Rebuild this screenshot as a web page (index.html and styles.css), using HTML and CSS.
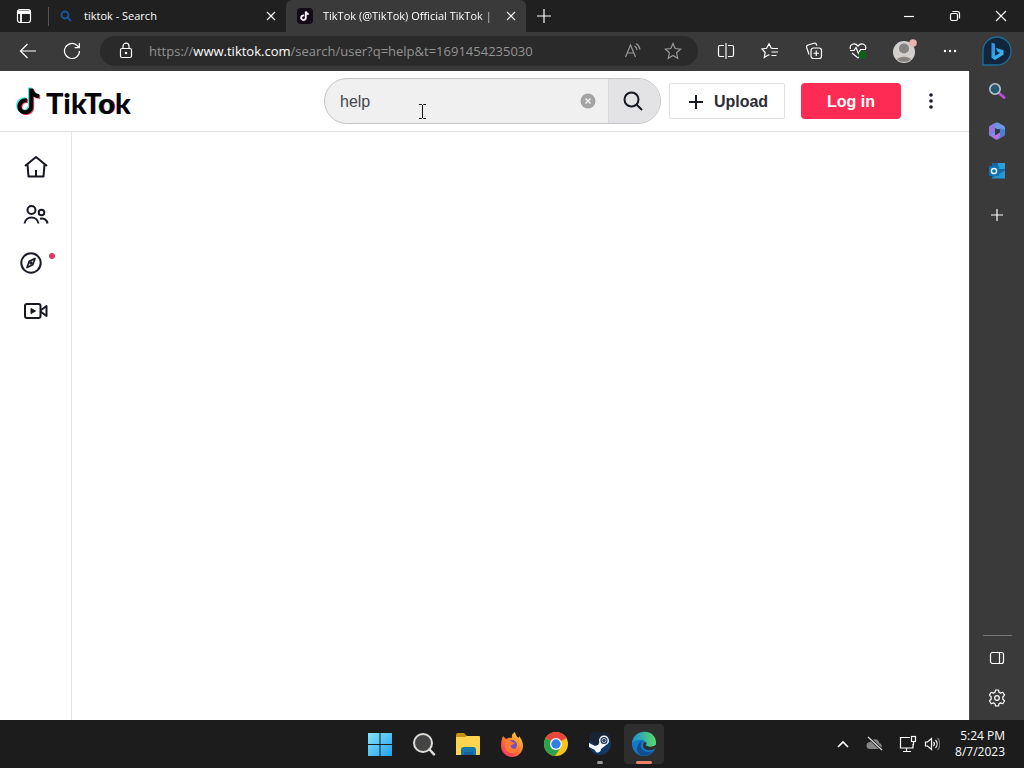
FILE: index.html
```html
<!DOCTYPE html>
<html lang="en">
<head>
<meta charset="utf-8">
<meta name="viewport" content="width=device-width, initial-scale=1">
<title>TikTok (@TikTok) Official TikTok</title>
<link rel="stylesheet" href="styles.css">
</head>
<body>
<div class="desktop">
  <div class="tabstrip">
    <button class="workspace" aria-label="Tab actions"><svg width="16" height="16" viewBox="0 0 16 16" class="line"><rect x="1.5" y="1.5" width="13" height="13" rx="2.5"/><path d="M1.5 3.5h13M2 5h12M5 5v9.500" stroke-width="1.800"/></svg></button>
    <div class="tab">
      <svg width="12" height="12" viewBox="0 0 12 12" fill="none" stroke="#17569c" stroke-width="1.800"><circle cx="5" cy="5" r="3.500"/><path d="M7.500 7.500L11 11"/></svg>
      <span class="tab-title">tiktok - Search</span>
      <button class="tab-close" aria-label="Close tab"><svg width="10" height="10" viewBox="0 0 10 10" class="line"><path d="M1 1l8 8M9 1L1 9"/></svg></button>
    </div>
    <div class="tab tab-active">
      <svg width="16" height="16" viewBox="0 0 16 16"><rect width="16" height="16" rx="4" fill="#120b18"/><g fill="none" stroke-width="1.700"><path d="M7 7.500a2.300 2.300 0 1 0 1.700 2.300V3.500c.3 1.500 1.300 2.500 3 2.500" stroke="#7c4a60" transform="translate(.4 .3)"/><path d="M7 7.500a2.300 2.300 0 1 0 1.700 2.300V3.500c.3 1.500 1.300 2.500 3 2.500" stroke="#fff"/></g></svg>
      <span class="tab-title">TikTok (@TikTok) Official TikTok |</span>
      <button class="tab-close" aria-label="Close tab"><svg width="10" height="10" viewBox="0 0 10 10" class="line"><path d="M1 1l8 8M9 1L1 9"/></svg></button>
    </div>
    <button class="new-tab" aria-label="New tab"><svg width="14" height="14" viewBox="0 0 14 14" class="line"><path d="M7 0v14M0 7h14"/></svg></button>
    <div class="window-controls">
      <button aria-label="Minimize"><svg width="10" height="10" viewBox="0 0 10 10" class="line"><path d="M0 5.500h10"/></svg></button>
      <button aria-label="Restore"><svg width="12" height="12" viewBox="0 0 12 12" class="line"><rect x="1.500" y="3.500" width="7" height="7" rx="1.500"/><path d="M3.500 1.500h5a2 2 0 0 1 2 2v5"/></svg></button>
      <button aria-label="Close"><svg width="12" height="12" viewBox="0 0 12 12" class="line"><path d="M1 1l10 10M11 1L1 11"/></svg></button>
    </div>
  </div>

  <div class="toolbar">
    <button class="tool" aria-label="Back"><svg width="18" height="18" viewBox="0 0 18 18" class="line"><path d="M17 9H1.500M8.500 2L1.500 9l7 7"/></svg></button>
    <button class="tool" aria-label="Refresh"><svg width="18" height="18" viewBox="0 0 18 18" class="line"><path d="M16.500 9A7.500 7.500 0 1 1 14 3.400L16 5.500M16.300 1v4.700h-4.700"/></svg></button>
    <div class="address">
      <svg width="16" height="18" viewBox="0 0 16 18" class="line"><rect x="2.500" y="6.500" width="11" height="9" rx="1.500"/><path d="M5 6.500V4.200a3 3 0 0 1 6 0v2.300"/><circle cx="8" cy="11" r=".7" fill="#fff"/></svg>
      <div class="url" role="textbox" aria-label="Address and search bar" contenteditable="true" spellcheck="false">https://<span class="host">www.tiktok.com</span>/search/user?q=help&amp;t=1691454235030</div>
      <button class="address-tool" aria-label="Read aloud"><svg width="18" height="18" viewBox="0 0 18 18" class="line dim"><path d="M1.500 15L6.500 3l5 12M3.200 11h6.600M10.500 4a5 5 0 0 1 2.500 4M12 1.500a8 8 0 0 1 4 6"/></svg></button>
      <button class="address-tool" aria-label="Add to favorites"><svg width="18" height="18" viewBox="0 0 18 18" class="line dim"><path d="M9 1.500l2.200 5 5.400.6-4 3.700 1.100 5.400L9 13.500l-4.700 2.700 1.100-5.400-4-3.700 5.400-.6z"/></svg></button>
    </div>
    <button class="tool" aria-label="Split screen"><svg width="18" height="16" viewBox="0 0 18 16" class="line"><path d="M7 2.500H3a1.500 1.500 0 0 0-1.500 1.500v8A1.500 1.500 0 0 0 3 13.500h4M11 2.500h4a1.500 1.500 0 0 1 1.500 1.500v8a1.500 1.500 0 0 1-1.500 1.500h-4"/><path d="M9 0v16" stroke="#aaa" stroke-width="2"/></svg></button>
    <button class="tool" aria-label="Favorites"><svg width="18" height="18" viewBox="0 0 18 18" class="line"><path d="M8.500 13.200L7.500 12.800l-4.200 2.700.9-5L1 7l4.600-.7L8 1.800l2.200 4.200 1.300.4M10.500 6.500h6.500M10.500 10h6.500M10.500 13.500h5"/></svg></button>
    <button class="tool" aria-label="Collections"><svg width="18" height="18" viewBox="0 0 18 18" class="line"><rect x="6" y="6" width="10.500" height="10.500" rx="2.500"/><path d="M11.250 8.500v5.500M8.500 11.250H14M4 12.500l-2.300-7A2 2 0 0 1 3 3l6-1.800a2 2 0 0 1 2.500 1.300l.3 1.200"/></svg></button>
    <button class="tool" aria-label="Browser essentials"><svg width="18" height="18" viewBox="0 0 18 18" class="line"><path d="M1.500 7C0 2.500 5.500 0 9 4c3.500-4 9-1.500 7.500 3M3 11l6 5 2-2M1 8.500h4l2-3 2.500 6 2-4H17"/><circle cx="13.500" cy="13" r="4" fill="#0b6318" stroke="none"/></svg></button>
    <button class="tool profile" aria-label="Profile"><svg width="26" height="26" viewBox="0 0 26 26"><circle cx="13" cy="14" r="11" fill="#d2cfcc"/><circle cx="13" cy="10.500" r="5" fill="#85827f"/><path d="M6 21.500a8 5.500 0 0 1 14 0 11 11 0 0 1-14 0z" fill="#85827f"/><circle cx="22" cy="5" r="3.800" fill="#e9b3b2"/></svg></button>
    <button class="tool" aria-label="Settings and more"><svg width="14" height="4" viewBox="0 0 14 4" fill="#fff"><circle cx="2" cy="2" r="1.200"/><circle cx="7" cy="2" r="1.200"/><circle cx="12" cy="2" r="1.200"/></svg></button>
    <button class="tool bing" aria-label="Bing Chat"><svg width="32" height="32" viewBox="0 0 32 32"><defs><linearGradient id="bing" x2="1" y2="1"><stop stop-color="#2f86e8"/><stop offset=".5" stop-color="#2aa6ee"/><stop offset="1" stop-color="#49c3f2"/></linearGradient></defs><path d="M2 30V16A14 14 0 1 1 16 30z" fill="#12263b" stroke="#1b6f9c" stroke-width="1.300"/><path d="M10.500 7.500l3.500 1.300v12l5-2.800-2.500-1.300-1.500-4 7.500 2.600v4.200L14 25l-3.500-2.300z" fill="url(#bing)"/></svg></button>
  </div>

  <div class="workspace-row">
    <div class="page">
      <header class="site-header">
        <a class="brand" href="#"><svg width="25" height="29" viewBox="0 0 25 29"><defs><path id="note" d="M12 .5h4c.4 3.300 2.600 5.500 6 5.700v4c-2.300 0-4.300-.7-6-1.900v10.200c0 10.500-15.800 10.300-15.800 0C.2 13 4.500 9.800 9.700 10.300v4.200c-3.100-.8-5.500 1-5.500 4 0 5.300 7.800 5.200 7.800-.6z"/></defs><use href="#note" fill="#45e8e0"/><use href="#note" fill="#f0406a" x="2.200" y="1.800"/><use href="#note" fill="#050505" x="1.200" y=".9"/></svg><span class="wordmark">TikT<span class="wordmark-o">o</span>k</span></a>
        <form class="search">
          <input class="search-input" type="text" value="help" aria-label="Search">
          <button class="clear" type="button" aria-label="Clear"><svg width="16" height="16" viewBox="0 0 16 16"><circle cx="8" cy="8" r="7.500" fill="#a4a4a5"/><path d="M5.500 5.500l5 5M10.500 5.500l-5 5" stroke="#f5f5f5" stroke-width="1.300"/></svg></button>
          <button class="search-button" type="button" aria-label="Submit search"><svg width="20" height="20" viewBox="0 0 20 20" fill="none" stroke="#161823" stroke-width="2"><circle cx="8.500" cy="8.500" r="7"/><path d="M13.500 13.500l5.500 5.500"/></svg></button>
        </form>
        <div class="actions">
          <button class="upload"><svg width="16" height="16" viewBox="0 0 16 16" stroke="#161823" stroke-width="2"><path d="M8 1v14M1 8h14"/></svg><span>Upload</span></button>
          <button class="login">Log in</button>
          <button class="more" aria-label="More"><svg width="4" height="18" viewBox="0 0 4 18" fill="#161823"><circle cx="2" cy="3" r="1.800"/><circle cx="2" cy="9" r="1.800"/><circle cx="2" cy="15" r="1.800"/></svg></button>
        </div>
      </header>
      <div class="content">
        <nav class="rail" aria-label="Main">
          <a href="#" aria-label="For You"><svg width="24" height="24" viewBox="0 0 24 24" class="ink"><path d="M1 11L12 2l11 9M3.500 9.500L4.500 21.500h15l1-12M12 15v6.500"/></svg></a>
          <a href="#" aria-label="Following"><svg width="26" height="24" viewBox="0 0 26 24" class="ink"><circle cx="8.500" cy="7" r="4"/><path d="M1.500 20.500c1-8 13-8 14 0"/><circle cx="18.500" cy="9.500" r="2.800"/><path d="M17 15.700c4-1 7 1 7.500 4.800"/></svg></a>
          <a href="#" class="explore" aria-label="Explore"><svg width="24" height="24" viewBox="0 0 24 24" class="ink"><circle cx="12" cy="12" r="9.700"/><path d="M16 7.500l-2.200 6.300L8 16.500l2.200-6.300z" stroke-width="1.700"/><circle cx="12" cy="12" r=".8"/></svg><span class="dot"></span></a>
          <a href="#" aria-label="Live"><svg width="26" height="24" viewBox="0 0 26 24" class="ink"><rect x="2" y="5" width="15.500" height="14" rx="2"/><path d="M17.500 11.500l6-4.500v10l-6-4.500"/><path d="M8 9.500l4.500 2.500L8 14.500z" fill="#161823" stroke-width="1"/></svg></a>
        </nav>
        <main class="results"></main>
      </div>
    </div>
    <aside class="sidebar">
      <button aria-label="Search"><svg width="18" height="18" viewBox="0 0 18 18"><path d="M11.500 11.500l4.500 4" stroke="#b94bd8" stroke-width="3" stroke-linecap="round"/><circle cx="7" cy="7" r="5.200" fill="#28596e" stroke="#bcc4cb" stroke-width="1.600"/></svg></button>
      <button aria-label="Microsoft 365"><svg width="18" height="18" viewBox="0 0 18 18"><path d="M9 .5q1 0 2 .5l5 3q1 .6 1 2v4l-5-3-5 1v6L2 14q-1-.6-1-2V6q0-1.300 1-2l5-3q1-.5 2-.5z" fill="#6c97e6"/><path d="M1 6q0-1.300 1-2l5-3v7l-2 4-4 1z" fill="#9278dc"/><path d="M17 8v4q0 1.400-1 2l-5 3q-2 1-4 0l-4-2.500 5-1 4-3V6z" fill="#4a7fd8"/><path d="M2 13.500l6-.5 4-2.500v4l-3 3q-1 0-2-.5z" fill="#b870da"/><path d="M7 6l5 2.500-5 3.500z" fill="#303644"/></svg></button>
      <button aria-label="Outlook"><svg width="18" height="18" viewBox="0 0 18 18"><path d="M4 1h13v15H4z" fill="#1569a8"/><path d="M10 1h7v6h-7z" fill="#2b9fd8"/><path d="M3 16.500l14-8v8z" fill="#2596d2"/><rect x="1" y="4" width="10" height="10" rx="1" fill="#0b70ba"/><circle cx="6" cy="9" r="2.600" fill="none" stroke="#e6f2fa" stroke-width="1.500"/></svg></button>
      <button class="customize" aria-label="Customize"><svg width="14" height="14" viewBox="0 0 14 14" class="line"><path d="M7 1v12M1 7h12"/></svg></button>
      <div class="sidebar-bottom">
        <button aria-label="Hide sidebar"><svg width="16" height="14" viewBox="0 0 16 14" class="line"><rect x="1.500" y="1.500" width="13" height="11" rx="2"/><path d="M10.500 1.500v11"/></svg></button>
        <button aria-label="Sidebar settings"><svg width="18" height="18" viewBox="0 0 18 18" class="line"><path d="M7.500 1h3l.5 2.300 1.500.8 2.300-.8 1.700 2.800L14.800 8v2l1.700 1.900-1.700 2.800-2.300-.8-1.500.8-.5 2.300h-3L7 14.700l-1.500-.8-2.300.8-1.700-2.800L3.200 10V8L1.500 6.100l1.700-2.800 2.300.8L7 3.300z" stroke-linejoin="round"/><circle cx="9" cy="9" r="2.300"/></svg></button>
      </div>
    </aside>
    <svg class="cursor" width="7" height="17" viewBox="0 0 7 17" fill="none" stroke="#111"><path d="M0 1.500h2.500l1 1 1-1H7M3.500 2v13M0 15.500h2.500l1-1 1 1H7"/></svg>
  </div>

  <footer class="taskbar">
    <div class="apps">
      <button aria-label="Start"><svg width="24" height="24" viewBox="0 0 24 24"><defs><linearGradient id="win" x2="1" y2="1"><stop stop-color="#83e5fa"/><stop offset="1" stop-color="#21a1ed"/></linearGradient></defs><path d="M0 1h11.500v11H0zM12.500 1H24v11H12.500zM0 13h11.500v11H0zM12.500 13H24v11H12.500z" fill="url(#win)"/></svg></button>
      <button aria-label="Search"><svg width="24" height="24" viewBox="0 0 24 24"><circle cx="11" cy="11" r="9" fill="#454545" stroke="#deddda" stroke-width="2"/><path d="M17.500 17.500l4.500 4.800" stroke="#deddda" stroke-width="2.500" stroke-linecap="round"/></svg></button>
      <button aria-label="File Explorer"><svg width="26" height="24" viewBox="0 0 26 24"><path d="M1 3q0-2 2-2h6l3 3h12v6H1z" fill="#c8920f"/><path d="M1 5h9l2-1h12q1 0 1 1v17q0 1-1 1H1z" fill="#fcd44f"/><path d="M6 23v-5q0-3 3-3h9q3 0 3 3v5z" fill="#1676ad"/><path d="M9 20h9v3H9z" fill="#1164a0"/></svg></button>
      <button aria-label="Firefox"><svg width="26" height="26" viewBox="0 0 26 26"><defs><linearGradient id="fox" x1="1" x2=".2" y2="1"><stop stop-color="#ffe34d"/><stop offset=".45" stop-color="#ff8d28"/><stop offset="1" stop-color="#f52f65"/></linearGradient></defs><path d="M4 5l3 3q3-2 6-1-1-4 3-6 1 5 4 6v-2q4 5 4 10a11 11 0 0 1-22 0q0-6 2-10z" fill="url(#fox)"/><circle cx="13" cy="14" r="5" fill="#7650bc"/><path d="M6 9q5-1 7 2l3 1q-2 2-4 2-1 3 3 4 4 0 5-4 1 7-6 8-8 0-8-7z" fill="#ff7a33"/></svg></button>
      <button aria-label="Chrome"><svg width="26" height="26" viewBox="0 0 26 26"><circle cx="13" cy="13" r="12" fill="#fbc517"/><path d="M13 13L2.600 7a12 12 0 0 1 20.800 0z" fill="#e8453c"/><path d="M13 13L2.600 7A12 12 0 0 0 12 25l6-9z" fill="#2ba14b"/><circle cx="13" cy="13" r="6" fill="#fff"/><circle cx="13" cy="13" r="4.700" fill="#337fe8"/></svg></button>
      <button class="running" aria-label="Steam"><svg width="24" height="24" viewBox="0 0 24 24"><circle cx="12" cy="12" r="11" fill="#123a65"/><path d="M1 8A11 11 0 0 1 23 8L10 15z" fill="#172436"/><path d="M1 11l6 3 3-1 3-5 5 5-5 4c0 4-5 5-6 1l-6-3z" fill="#f4f7fa"/><circle cx="16" cy="8.500" r="4.300" fill="#172e49" stroke="#f4f7fa" stroke-width="1.500"/><circle cx="16" cy="8.500" r="2" fill="none" stroke="#c8d4df"/></svg></button>
      <button class="current" aria-label="Microsoft Edge"><svg width="26" height="26" viewBox="0 0 26 26"><defs><linearGradient id="edge"><stop stop-color="#1b91d9"/><stop offset="1" stop-color="#59da65"/></linearGradient></defs><circle cx="13" cy="13" r="12" fill="#1677c6"/><path d="M1 12C3-3 25-3 25 12c0 6-9 7-10 3 3-6-7-9-14-3z" fill="url(#edge)"/><path d="M11 10c-4 8 3 13 11 10-7 9-17 4-16-3q1-5 5-7z" fill="#124d8e"/><path d="M13 11q-3 6 3 8 5 1 9-2v-3q-5 3-9 1-3-1 0-3z" fill="#2e2e2e"/></svg></button>
    </div>
    <div class="tray">
      <button class="chevron" aria-label="Show hidden icons"><svg width="12" height="12" viewBox="0 0 12 12" class="line"><path d="M1 9l5-5 5 5" stroke-width="1.600"/></svg></button>
      <button class="cloud" aria-label="OneDrive"><svg width="18" height="16" viewBox="0 0 18 16"><path d="M4 13a3.500 3.500 0 0 1 0-7 5 5 0 0 1 9.300 1A3.200 3.200 0 0 1 14 13z" fill="#858585"/><path d="M2 1l14 13" stroke="#1c1c1c" stroke-width="3"/><path d="M2 1l14 13" stroke="#ddd" stroke-width="1.200"/></svg></button>
      <button class="status" aria-label="Network and volume"><svg width="18" height="18" viewBox="0 0 18 18" class="line"><path d="M11 2.500H1.500v10.500H14V9M7.500 13v3.500M4 16.500h8"/><rect x="12.500" y="1.500" width="4" height="5"/><path d="M14.500 6.500V10"/></svg><svg width="16" height="16" viewBox="0 0 16 16" class="line"><path d="M1.500 6h2L7.500 2.500v11L3.500 10h-2zM9.500 6a3 3 0 0 1 0 4M11.500 4a6 6 0 0 1 0 8"/><path d="M13.500 2a9 9 0 0 1 0 12" stroke="#777"/></svg></button>
      <button class="clock"><time datetime="17:24">5:24 PM</time><time datetime="2023-08-07">8/7/2023</time></button>
    </div>
  </footer>
</div>
</body>
</html>
```
FILE: styles.css
```css
* { box-sizing: border-box; }

body {
  margin: 0;
  font-family: "Open Sans", "Noto Sans", sans-serif;
  color: #fff;
  background: #1c1c1c;
}

button {
  margin: 0;
  padding: 0;
  border: 0;
  background: none;
  color: inherit;
  font: inherit;
  display: flex;
  align-items: center;
  justify-content: center;
}

svg { flex: none; display: block; }

.line { fill: none; stroke: #fff; stroke-width: 1.2; }
.dim { stroke: #9a9a9a; }
.ink { fill: none; stroke: #161823; stroke-width: 2; stroke-linejoin: round; }

.desktop { min-height: 100vh; display: flex; flex-direction: column; }

/* Tab strip */
.tabstrip { height: 32px; display: flex; background: #202020; }
.workspace { width: 48px; }
.tab {
  width: 238px;
  padding-left: 12px;
  display: flex;
  align-items: center;
  gap: 12px;
  font-size: 11px;
  position: relative;
}
.tab:not(.tab-active)::before {
  content: "";
  position: absolute;
  left: 0;
  top: 7px;
  width: 1px;
  height: 19px;
  background: #555;
}
.tab-active {
  width: 240px;
  padding-left: 11px;
  gap: 10px;
  background: #3a3a3a;
  border-radius: 6px 6px 0 0;
}
.tab-title {
  flex: 1;
  min-width: 0;
  white-space: nowrap;
  line-height: 20px;
}
.tab-active .tab-title { mask-image: linear-gradient(to right, #000 88%, rgba(0, 0, 0, 0.4)); }
.tab-close { width: 30px; height: 32px; margin-left: -12px; }
.new-tab { width: 36px; }
.window-controls { display: flex; margin-left: auto; }
.window-controls button { width: 46px; }

/* Toolbar */
.toolbar {
  height: 39px;
  padding: 0 2px 1px 6px;
  display: flex;
  align-items: center;
  background: #3a3a3a;
}
.tool { width: 44px; height: 36px; }
.profile { width: 48px; }
.bing { width: 50px; }
.address {
  flex: 1;
  min-width: 0;
  height: 30px;
  margin: 0 6px;
  padding: 0 5px 0 18px;
  display: flex;
  align-items: center;
  background: #2a2a2a;
  border-radius: 15px;
}
.url {
  flex: 1;
  min-width: 0;
  margin-left: 15px;
  overflow: hidden;
  white-space: nowrap;
  font-size: 13px;
  line-height: 20px;
  color: #939393;
}
.host { color: #fff; }
.address-tool { width: 40px; height: 30px; }

/* Browser body */
.workspace-row { flex: 1; display: flex; position: relative; background: #3a3a3a; }
.page {
  flex: 1;
  min-width: 0;
  display: flex;
  flex-direction: column;
  background: #fff;
  color: #161823;
  font-family: "Liberation Sans", Arial, sans-serif;
}
.site-header {
  height: 61px;
  padding: 0 16px;
  display: flex;
  align-items: center;
  border-bottom: 1px solid #e0e0e1;
}
.brand { display: flex; align-items: center; gap: 5px; color: #050505; text-decoration: none; }
.wordmark { padding-top: 3px; font-family: Lato, sans-serif; font-weight: 900; font-size: 29px; line-height: 32px; }
.wordmark-o { text-shadow: -1px 0 #25f4ee, 1px 0 #fe2c55; }

.search {
  width: 337px;
  height: 46px;
  margin-left: auto;
  display: flex;
  align-items: stretch;
  overflow: hidden;
  background: #f0f0f1;
  border: 1px solid #c4c4c7;
  border-radius: 23px;
}
.search-input {
  flex: 1;
  min-width: 0;
  padding: 2px 0 0 15px;
  border: 0;
  outline: 0;
  background: none;
  color: #45464c;
  font: 16px/24px "Liberation Sans", Arial, sans-serif;
}
.clear { width: 40px; }
.search-button { width: 52px; padding-right: 3px; background: #e3e3e6; border-left: 1px solid #d8d8db; }

.actions { display: flex; align-items: center; margin-left: 8px; font-size: 16px; font-weight: 700; }
.upload {
  width: 116px;
  height: 36px;
  padding: 2px 0 0 2px;
  gap: 10px;
  border: 1px solid #e1e1e3;
  border-radius: 2px;
  color: #2b2c35;
}
.login { width: 100px; height: 36px; padding-top: 2px; margin-left: 16px; border-radius: 4px; background: #fe2c55; color: #fff; }
.more { width: 44px; height: 36px; margin-left: 8px; }

.content { flex: 1; display: flex; }
.rail {
  width: 72px;
  padding-top: 11px;
  display: flex;
  flex-direction: column;
  border-right: 1px solid #e6e6e7;
}
.rail a { height: 48px; display: flex; align-items: center; justify-content: center; }
.rail .explore { gap: 6px; padding-left: 3px; }
.dot { width: 6px; height: 6px; margin-bottom: 14px; border-radius: 50%; background: #e03660; }
.results { flex: 1; }

.cursor { position: absolute; left: 419px; top: 32px; }

/* Browser sidebar */
.sidebar { width: 55px; display: flex; flex-direction: column; border-left: 1px solid #4b4b4b; }
.sidebar button { width: 100%; height: 40px; }
.sidebar .customize { margin-top: 4px; }
.sidebar-bottom { margin-top: auto; padding-bottom: 2px; }
.sidebar-bottom::before { content: ""; display: block; height: 1px; margin: 0 12px 2px 13px; background: #777; }

/* Taskbar */
.taskbar { height: 48px; display: grid; grid-template-columns: 1fr auto 1fr; align-items: center; background: #1c1c1c; }
.apps { grid-column: 2; display: flex; gap: 4px; }
.apps button { width: 40px; height: 40px; border-radius: 4px; position: relative; }
.apps .current { background: #2e2e2e; }
.running::after,
.current::after {
  content: "";
  position: absolute;
  bottom: 0;
  width: 6px;
  height: 3px;
  border-radius: 2px;
  background: #9a9a9a;
}
.current::after { width: 16px; background: #e8836c; }
.tray { display: flex; align-items: center; justify-content: flex-end; padding-right: 19px; }
.tray button { height: 40px; }
.chevron { width: 32px; }
.cloud { width: 32px; }
.status { width: 56px; gap: 7px; }
.tray .clock {
  margin-left: 8px;
  flex-direction: column;
  align-items: flex-end;
  font-size: 12px;
  line-height: 16px;
}
```
